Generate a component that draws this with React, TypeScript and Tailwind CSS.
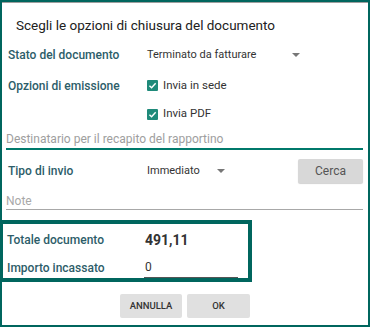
export default function App() {
  return (
    <div
      className="w-[370px] h-[327px] bg-white border-2 border-[#00665e] flex flex-col text-[11px] text-[#333] overflow-hidden"
      style={{ fontFamily: 'Roboto, "Liberation Sans", sans-serif' }}
    >
      <div className="h-px bg-[#9e9e9e] shrink-0" />
      <div className="h-[37px] pt-[13px] px-[14px] text-[13.5px] leading-[18px] text-[#212121] shrink-0">
        Scegli le opzioni di chiusura del documento
      </div>

      <div className="flex items-center h-[30px] px-[6px] shrink-0">
        <div className="w-[139px] text-[12px] font-medium text-[#2d5d69]">Stato del documento</div>
        <span className="w-[145px]">Terminato da fatturare</span>
        <Caret />
      </div>

      <div className="flex items-center h-[31px] px-[6px] shrink-0">
        <div className="w-[139px] text-[12px] font-medium text-[#2d5d69]">Opzioni di emissione</div>
        <Check label="Invia in sede" />
      </div>
      <div className="flex items-center h-[26px] px-[6px] shrink-0">
        <div className="w-[139px]" />
        <Check label="Invia PDF" />
      </div>

      <div className="h-[23px] ml-[4px] mr-[5px] pt-[4px] border-b-2 border-[#00796b] text-[12px] leading-[17px] text-[#9e9e9e] shrink-0">
        Destinatario per il recapito del rapportino
      </div>

      <div className="flex items-center h-[42px] pl-[6px] pr-[5px] shrink-0">
        <div className="w-[139px] text-[12px] font-medium text-[#2d5d69]">Tipo di invio</div>
        <span className="w-[70px]">Immediato</span>
        <Caret />
        <div className="ml-auto w-[65px] h-[24px] bg-[#d8d8d8] rounded-[2px] shadow-[0_1px_1px_rgba(0,0,0,0.18)] flex items-center justify-center text-[12px] text-[#555]">
          Cerca
        </div>
      </div>

      <div className="h-[18px] ml-[4px] mr-[5px] pt-[1px] border-b border-[#a8a8a8] text-[12px] leading-[16px] text-[#a8a8a8] shrink-0">
        Note
      </div>

      <div className="mt-[10px] -ml-[2px] w-[252px] h-[62px] border-[4px] border-l-[3px] border-[#00665e] flex flex-col pt-[4px] gap-[4px] pl-[4px] shrink-0">
        <div className="flex items-center h-[24px] shrink-0">
          <div className="w-[138px] text-[12px] font-medium text-[#2d5d69]">Totale documento</div>
          <div className="text-[14px] font-bold text-[#333]">491,11</div>
        </div>
        <div className="flex items-center h-[24px] shrink-0">
          <div className="w-[137px] text-[12px] font-medium text-[#2d5d69]">Importo incassato</div>
          <div className="w-[94px] h-[20px] border-b border-[#555] text-[12px] leading-[18px] px-[1px]">0</div>
        </div>
      </div>

      <div className="flex gap-[5px] mt-[12px] pl-[118px] shrink-0">
        <div className="w-[62px] h-[24px] bg-[#e0e0e0] rounded-[2px] flex items-center justify-center text-[9.5px] font-medium text-[#333]">
          ANNULLA
        </div>
        <div className="w-[63px] h-[24px] bg-[#e0e0e0] rounded-[2px] flex items-center justify-center text-[9.5px] font-medium text-[#333]">
          OK
        </div>
      </div>
    </div>
  );
}

function Caret() {
  return <span className="w-0 h-0 border-x-[4px] border-x-transparent border-t-[4px] border-t-[#777]" />;
}

function Check({ label }: { label: string }) {
  return (
    <div className="flex items-center gap-[5px]">
      <span className="w-[11px] h-[11px] rounded-[1px] bg-[#1f8a7a] flex items-center justify-center">
        <svg width="9" height="9" viewBox="0 0 10 10">
          <path d="M1.6 5.2 L4 7.4 L8.5 2.6" fill="none" stroke="white" strokeWidth="1.6" />
        </svg>
      </span>
      <span className="text-[11.5px]">{label}</span>
    </div>
  );
}
